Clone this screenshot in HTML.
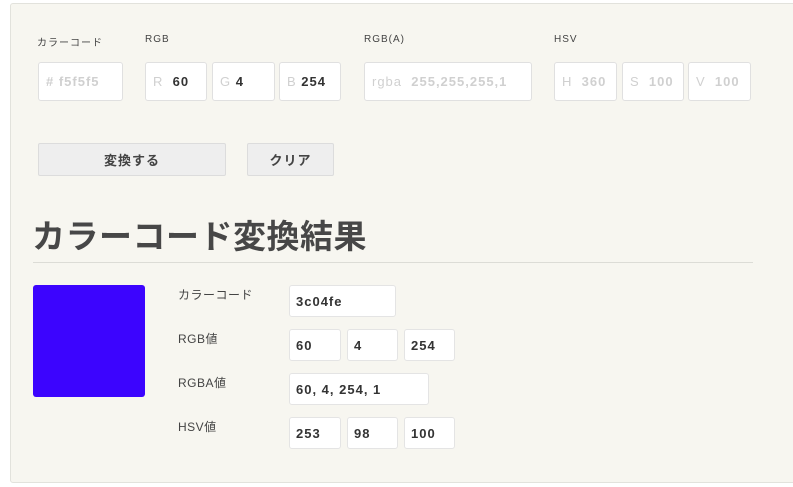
<!DOCTYPE html>
<html><head><meta charset="utf-8"><style>
*{box-sizing:border-box;margin:0;padding:0}
body{width:793px;height:487px;background:#fff;font-family:"Liberation Sans","Noto Sans CJK JP",sans-serif;position:relative;overflow:hidden;color:#444}
.panel{position:absolute;left:10px;top:3px;width:800px;height:480px;background:#f7f6f0;border:1px solid #e2e2dc;border-radius:3px}
.a{position:absolute}
.lbl{font-size:10px;letter-spacing:1px;color:#444}
.in{position:absolute;background:#fff;border:1px solid #e0e0e0;border-radius:3px;font-size:13px;display:flex;align-items:center;padding-left:7px;letter-spacing:1px}
.ph{color:#d0d0d0}
.v{color:#333;font-weight:bold}
.btn{position:absolute;background:#eeeeee;border:1px solid #dcdcdc;border-radius:2px;font-size:13px;font-weight:bold;color:#444;display:flex;align-items:center;justify-content:center;letter-spacing:1px}
.ol{font-size:12px;color:#444;letter-spacing:0.5px}
.ob{position:absolute;background:#fff;border:1px solid #e4e4e4;border-radius:3px;font-size:13px;font-weight:bold;color:#333;display:flex;align-items:center;padding-left:6px;letter-spacing:1px}
</style></head><body>
<div class="panel"></div>
<div class="a lbl" style="left:37px;top:34px">カラーコード</div>
<div class="a lbl" style="left:145px;top:34px">RGB</div>
<div class="a lbl" style="left:364px;top:34px">RGB(A)</div>
<div class="a lbl" style="left:554px;top:34px">HSV</div>

<div class="in" style="left:38px;top:62px;width:85px;height:39px"><span class="ph" style="font-weight:bold">#&nbsp;f5f5f5</span></div>
<div class="in" style="left:145px;top:62px;width:62px;height:39px"><span class="ph">R&nbsp;</span>&nbsp;<span class="v">60</span></div>
<div class="in" style="left:212px;top:62px;width:63px;height:39px"><span class="ph">G&nbsp;</span><span class="v">4</span></div>
<div class="in" style="left:279px;top:62px;width:62px;height:39px"><span class="ph">B&nbsp;</span><span class="v">254</span></div>
<div class="in" style="left:364px;top:62px;width:168px;height:39px"><span class="ph">rgba&nbsp;&nbsp;<b>255,255,255,1</b></span></div>
<div class="in" style="left:554px;top:62px;width:63px;height:39px"><span class="ph">H&nbsp;&nbsp;<b>360</b></span></div>
<div class="in" style="left:622px;top:62px;width:62px;height:39px"><span class="ph">S&nbsp;&nbsp;<b>100</b></span></div>
<div class="in" style="left:688px;top:62px;width:63px;height:39px"><span class="ph">V&nbsp;&nbsp;<b>100</b></span></div>

<div class="btn" style="left:38px;top:143px;width:188px;height:33px">変換する</div>
<div class="btn" style="left:247px;top:143px;width:87px;height:33px">クリア</div>

<div class="a" style="left:32px;top:210px;font-size:33px;font-weight:bold;color:#474747;letter-spacing:0.5px">カラーコード変換結果</div>
<div class="a" style="left:33px;top:262px;width:720px;height:1px;background:#dcdcd6"></div>

<div class="a" style="left:33px;top:285px;width:112px;height:112px;background:#3c04fe;border-radius:3px"></div>

<div class="a ol" style="left:178px;top:286px">カラーコード</div>
<div class="a ol" style="left:178px;top:330px">RGB値</div>
<div class="a ol" style="left:178px;top:374px">RGBA値</div>
<div class="a ol" style="left:178px;top:418px">HSV値</div>

<div class="ob" style="left:289px;top:285px;width:107px;height:32px">3c04fe</div>
<div class="ob" style="left:289px;top:329px;width:52px;height:32px">60</div>
<div class="ob" style="left:347px;top:329px;width:51px;height:32px">4</div>
<div class="ob" style="left:404px;top:329px;width:51px;height:32px">254</div>
<div class="ob" style="left:289px;top:373px;width:140px;height:32px">60, 4, 254, 1</div>
<div class="ob" style="left:289px;top:417px;width:52px;height:32px">253</div>
<div class="ob" style="left:347px;top:417px;width:51px;height:32px">98</div>
<div class="ob" style="left:404px;top:417px;width:51px;height:32px">100</div>
</body></html>
